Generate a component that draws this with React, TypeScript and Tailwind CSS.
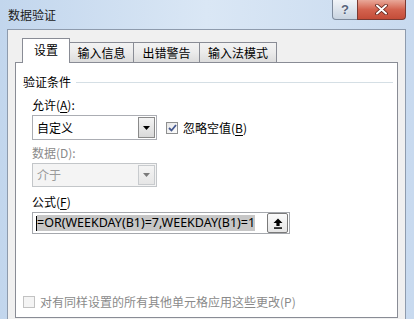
import React from 'react'

const cjk = "font-['Noto_Sans_CJK_SC','Microsoft_YaHei',sans-serif]"

function DropArrow({ disabled }: { disabled?: boolean }) {
    return (
        <div className={`w-[17px] h-full border flex items-center justify-center ${disabled ? 'border-[#c8cbce] bg-gradient-to-b from-[#f4f4f4] to-[#e6e6e6]' : 'border-[#8a8a8a] bg-gradient-to-b from-[#f4f4f4] to-[#d9d9d9]'}`}>
            <svg width="7" height="4" viewBox="0 0 7 4">
                <path d="M0 0 H7 L3.5 4 Z" fill={disabled ? '#7a7a7a' : '#000'} />
            </svg>
        </div>
    )
}

function Select({ value, disabled }: { value: string; disabled?: boolean }) {
    return (
        <div className={`w-[125px] flex items-stretch border p-px ${disabled ? 'h-[24px] border-[#c3c6c9] bg-[#f4f4f4] text-[#9a9a9a]' : 'h-[25px] border-[#abadb3] bg-white'}`}>
            <div className="flex-1 flex items-center pl-[3px] leading-[16px]">{value}</div>
            <DropArrow disabled={disabled} />
        </div>
    )
}

function Tab({ label, width, active }: { label: string; width: string; active?: boolean }) {
    if (active) {
        return (
            <div className={`${width} h-[25px] -mb-px relative z-10 border border-b-0 border-[#898c95] bg-white flex items-center justify-center pb-[2px]`}>
                {label}
            </div>
        )
    }
    return (
        <div className={`${width} h-[20px] -ml-px border border-b-0 border-[#898c95] bg-gradient-to-b from-[#f3f3f3] via-[#ebebeb] to-[#dcdcdc] flex items-center justify-center`}>
            {label}
        </div>
    )
}

export default function App() {
    return (
        <div className={`w-[414px] h-[319px] overflow-hidden flex flex-col bg-gradient-to-r from-[#c2d6ed] via-[#dae7f5] to-[#c8daef] text-[12px] text-black ${cjk}`}>
            {/* title bar */}
            <div className="h-[29px] shrink-0 flex items-start">
                <div className="pl-[8px] pt-[6px] leading-[18px] text-[#1a1a1a]">数据验证</div>
                <div className="ml-auto mr-[8px] flex">
                    <div className="w-[26px] h-[20px] border border-t-0 border-[#7d8a9c] rounded-bl-[4px] bg-gradient-to-b from-[#f1f4f8] to-[#c8d3e0] flex items-center justify-center">
                        <span className="text-[13px] leading-none font-bold text-[#56637a] font-['Liberation_Sans',sans-serif] [text-shadow:0_0_2px_#fff]">?</span>
                    </div>
                    <div className="w-[49px] h-[20px] -ml-px border border-t-0 border-[#7a3a32] rounded-br-[4px] bg-gradient-to-b from-[#e8a899] via-[#d3634f] to-[#c44c38] flex items-center justify-center">
                        <svg width="13" height="11" viewBox="0 0 13 11">
                            <path d="M2 1.5 L11 9.5 M11 1.5 L2 9.5" stroke="#5a1f17" strokeWidth="3.6" strokeLinecap="round" />
                            <path d="M2 1.5 L11 9.5 M11 1.5 L2 9.5" stroke="#fff" strokeWidth="2" strokeLinecap="round" />
                        </svg>
                    </div>
                </div>
            </div>

            {/* client area */}
            <div className="flex-1 flex pl-[7px] pr-[8px]">
                <div className="flex-1 flex flex-col border border-b-0 border-[#8e9bad] bg-[#f0f0f0] pl-[7px] pr-[7px] pt-[8px] pb-px">
                    <div className="h-[24px] flex items-end pl-[7px]">
                        <Tab label="设置" width="w-[48px]" active />
                        <Tab label="输入信息" width="w-[65px]" />
                        <Tab label="出错警告" width="w-[67px]" />
                        <Tab label="输入法模式" width="w-[78px]" />
                    </div>

                    <div className="flex-1 flex flex-col border border-[#898c95] bg-white">
                        <div className="flex items-center pl-[7px] pr-[4px] pt-[11px] leading-[16px]">
                            <span>验证条件</span>
                            <div className="flex-1 h-px bg-[#d5dfe5] ml-[5px]" />
                        </div>

                        <div className="pl-[16px] flex flex-col">
                            <div className="mt-[7px] leading-[16px]">允许(<span className="underline underline-offset-2">A</span>):</div>
                            <div className="mt-[2px] flex items-center">
                                <Select value="自定义" />
                                <div className="ml-[9px] w-[12px] h-[12px] border border-[#8e8f8f] bg-gradient-to-br from-[#e6e6e6] to-[#fdfdfd] flex items-center justify-center">
                                    <svg width="9" height="8" viewBox="0 0 9 8">
                                        <path d="M1 4 L3.5 6.5 L8 1" fill="none" stroke="#45588f" strokeWidth="1.8" />
                                    </svg>
                                </div>
                                <span className="ml-[5px] leading-[16px]">忽略空值(<span className="underline underline-offset-2">B</span>)</span>
                            </div>

                            <div className="mt-[5px] leading-[16px] text-[#8a8a8a]">数据(D):</div>
                            <div className="mt-[2px]">
                                <Select value="介于" disabled />
                            </div>

                            <div className="mt-[7px] leading-[16px]">公式(<span className="underline underline-offset-2">F</span>)</div>
                            <div className="mt-[2px] w-[258px] h-[22px] border border-[#a5a8ad] bg-white flex items-center pl-[3px] pr-px">
                                <div className="w-px h-[15px] bg-black" />
                                <div className="bg-[#c7c7c7] leading-[16px] whitespace-nowrap font-['Noto_Sans',sans-serif] text-[12.5px]">
                                    =OR(WEEKDAY(B1)=7,WEEKDAY(B1)=1
                                </div>
                                <div className="ml-auto w-[21px] h-[20px] border border-[#7a7a7a] rounded-[2px] bg-gradient-to-b from-[#fbfbfb] to-[#e5e5e5] flex items-center justify-center">
                                    <svg width="10" height="11" viewBox="0 0 10 11">
                                        <path d="M5 0.5 L9.5 5 H6.6 V8 H3.4 V5 H0.5 Z" fill="#000" />
                                        <rect x="1" y="9.3" width="8" height="1.5" fill="#000" />
                                    </svg>
                                </div>
                            </div>
                        </div>

                        <div className="mt-auto pb-[7px] pl-[7px] flex items-center">
                            <div className="w-[12px] h-[12px] border border-[#c2c2c2] bg-[#f4f4f4]" />
                            <span className="ml-[5px] leading-[16px] text-[#8a8a8a]">对有同样设置的所有其他单元格应用这些更改(P)</span>
                        </div>
                    </div>
                </div>
            </div>
        </div>
    )
}
